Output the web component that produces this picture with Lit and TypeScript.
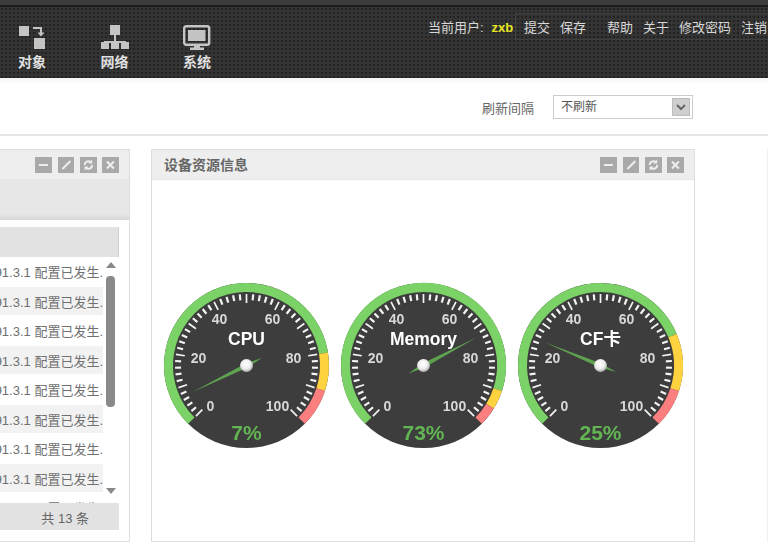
import { LitElement, html, css, svg } from "lit";
import { customElement, property } from "lit/decorators.js";

const CX = 88.5, CY = 88.5;
const polar = (r: number, deg: number) => {
  const a = ((deg - 90) * Math.PI) / 180;
  return [CX + r * Math.cos(a), CY + r * Math.sin(a)];
};
const toDeg = (v: number) => -135 + (v / 100) * 270;
const band = (from: number, to: number, r: number) => {
  const [x1, y1] = polar(r, toDeg(from));
  const [x2, y2] = polar(r, toDeg(to));
  const large = toDeg(to) - toDeg(from) > 180 ? 1 : 0;
  return `M${x1} ${y1}A${r} ${r} 0 ${large} 1 ${x2} ${y2}`;
};

@customElement("gauge-dial")
class GaugeDial extends LitElement {
  @property() label = "";
  @property({ type: Number }) value = 0;
  @property({ type: Number }) green = 80;
  @property({ type: Number }) yellow = 90;

  static styles = css`
    :host { display: block; width: 177px; height: 177px; }
    svg { display: block; filter: blur(0.4px); }
    .title { font: bold 17.5px "Liberation Sans", "Noto Sans CJK SC", sans-serif; fill: #fff; text-anchor: middle; }
    .num { font: bold 14px "Liberation Sans", sans-serif; fill: #d8d8d8; text-anchor: middle; }
    .val { font: bold 21px "Liberation Sans", sans-serif; fill: #62b552; text-anchor: middle; }
    .tick { stroke: #f4f4f4; fill: none; }
    .needle { fill: #5fa350; }
  `;

  render() {
    const ticks = [];
    for (let v = 0; v <= 100; v += 2) {
      const major = v % 10 === 0;
      const [x1, y1] = polar(71.5, toDeg(v));
      const [x2, y2] = polar(major ? 62.5 : 65.5, toDeg(v));
      ticks.push(svg`<line class="tick" x1=${x1} y1=${y1} x2=${x2} y2=${y2} stroke-width=${major ? 1.7 : 2.2}></line>`);
    }
    const nums: [string, number, number][] = [
      ["0", -36, 45], ["20", -48, -3], ["40", -27, -42],
      ["60", 26, -42], ["80", 47, -3], ["100", 31, 45],
    ];
    const [tx, ty] = polar(60, toDeg(this.value));
    const [bx, by] = polar(17, toDeg(this.value) + 180);
    const [sx, sy] = polar(2.2, toDeg(this.value) + 90);
    const ox = sx - CX, oy = sy - CY;
    return html`<svg width="177" height="177" viewBox="0 0 177 177">
      <defs>
        <radialGradient id="hub" cx="45%" cy="40%" r="60%">
          <stop offset="0" stop-color="#ffffff"></stop>
          <stop offset="0.6" stop-color="#eeeeee"></stop>
          <stop offset="1" stop-color="#a8a8a8"></stop>
        </radialGradient>
      </defs>
      <circle cx=${CX} cy=${CY} r="82.5" fill="#3d3d3d"></circle>
      <path d=${band(0, this.green, 78)} fill="none" stroke="#7bd266" stroke-width="9"></path>
      <path d=${band(this.green, this.yellow, 78)} fill="none" stroke="#ffd23f" stroke-width="9"></path>
      <path d=${band(this.yellow, 100, 78)} fill="none" stroke="#fb7f7f" stroke-width="9"></path>
      ${ticks}
      ${nums.map(([t, dx, dy]) => svg`<text class="num" x=${CX + dx} y=${CY + dy}>${t}</text>`)}
      <text class="title" x=${CX} y=${CY - 21}>${this.label}</text>
      <polygon class="needle" points="${tx},${ty} ${CX + ox},${CY + oy} ${bx},${by} ${CX - ox},${CY - oy}"></polygon>
      <circle cx=${CX} cy=${CY} r="6.5" fill="url(#hub)"></circle>
      <text class="val" x=${CX} y=${CY + 74.5}>${this.value}%</text>
    </svg>`;
  }
}

@customElement("panel-tools")
class PanelTools extends LitElement {
  static styles = css`
    :host { display: flex; gap: 5.5px; }
    span { display: block; width: 16.8px; height: 16px; background: #a9a9a9; }
    svg { display: block; width: 100%; height: 100%; }
    .s { stroke: #eee; stroke-width: 2; fill: none; }
  `;
  render() {
    return html`
      <span><svg viewBox="0 0 16 16"><path class="s" d="M3.5 8h9"></path></svg></span>
      <span><svg viewBox="0 0 16 16"><path class="s" d="M4 12l8-8"></path></svg></span>
      <span><svg viewBox="0 0 16 16"><path class="s" d="M4.2 8a3.8 3.8 0 0 1 6-3.1M11.8 8a3.8 3.8 0 0 1-6 3.1"></path><path d="M11.8 2.5v4h-4zM4.2 13.5v-4h4z" fill="#eee"></path></svg></span>
      <span><svg viewBox="0 0 16 16"><path class="s" d="M4.5 4.5l7 7M11.5 4.5l-7 7"></path></svg></span>
    `;
  }
}

@customElement("app-root")
class AppRoot extends LitElement {
  static styles = css`
    :host { display: block; width: 768px; height: 553px; overflow: hidden; background: #fff;
      font-family: "Liberation Sans", "Noto Sans CJK SC", sans-serif; position: relative; }
    .strip { height: 5px; background: #3b3b3b; border-bottom: 2px solid #1c1c1c; }
    .top { height: 71px; display: flex; justify-content: space-between; background-color: #343434;
      background-image: radial-gradient(circle at 2px 2px, #222 1px, transparent 1.3px); background-size: 4px 4px; }
    .nav { display: flex; gap: 54.5px; padding: 18px 0 0 18px; }
    .nav-item { width: 28px; display: flex; flex-direction: column; align-items: center; gap: 1px;
      color: #e0e0e0; font-size: 14px; font-weight: bold; line-height: 20px; white-space: nowrap; }
    .nav-item svg { display: block; width: 30px; height: 26px; }
    .ic { fill: #c4c4c4; }
    .ic-s { stroke: #c4c4c4; fill: none; }
    .user { display: flex; align-items: center; height: 27px; margin-top: 6px; font-size: 13px; color: #d8d8d8; white-space: nowrap; }
    .who { width: 87px; display: flex; align-items: baseline; }
    .zxb { color: #e6e622; font-weight: bold; margin-left: 8px; }
    .actions { display: flex; align-items: center; height: 27px; padding-left: 8px; border-left: 1px solid #444; border-top: 1px solid #3f3f3f; border-bottom: 1px solid #3f3f3f; box-sizing: border-box; }
    .actions span { margin-right: 10px; }
    .actions .gap { margin-right: 21px; }
    .actions span:last-child { margin-right: 1px; }
    .bar { height: 56px; background: linear-gradient(#f4f4f4 0, #fff 6px); border-bottom: 2px solid #e6e6e6;
      display: flex; justify-content: flex-end; align-items: center; padding-right: 75px; font-size: 13px; color: #666; }
    .bar-label { margin: 2px 19px 0 0; }
    .select { width: 140px; height: 24px; margin-top: 2px; box-sizing: border-box; border: 1px solid #ccc; display: flex; align-items: center; justify-content: space-between;
      padding: 0 2.5px 0 7px; font-size: 12px; color: #555; }
    .select span { margin-top: -4px; }
    .arrow { width: 18px; height: 18px; background: #cfcfcf; border: 1px solid #bbb; box-sizing: border-box; }
    .arrow svg { display: block; width: 100%; height: 100%; }
    .main { display: flex; padding-top: 13px; gap: 21px; }
    .panel { height: 393px; flex: none; box-sizing: border-box; border: 1px solid #dedede; background: #fff; overflow: hidden; }
    .left { width: 130px; border-left: 0; display: flex; flex-direction: column; }
    .right { width: 544px; }
    .faint { width: 10px; margin-left: 51px; flex: none; height: 393px; border-left: 1px solid #f0f0f0; }
    .phead { height: 29px; flex: none; background: #eee; display: flex; align-items: center; justify-content: space-between; padding: 0 10px 0 12px; border-bottom: 1px solid #e6e6e6; }
    .left .phead { justify-content: flex-end; }
    .ptitle { font-size: 14px; font-weight: bold; color: #666; margin-top: -2px; }
    .band { height: 40px; flex: none; background: linear-gradient(#e7e7e7 85%, #d6d6d6); }
    .thead { height: 30px; flex: none; width: 119px; margin-top: 7px; background: #e2e2e2; border-right: 1px solid #d0d0d0; box-sizing: border-box; }
    .listwrap { height: 246px; flex: none; display: flex; overflow: hidden; }
    .list { width: 103px; flex: none; padding-top: 0.5px; }
    .row { height: 28px; margin-bottom: 1.5px; display: flex; justify-content: flex-end; align-items: center;
      font-size: 13px; color: #707070; white-space: nowrap; overflow: hidden; }
    .row.alt { background: #f2f2f2; }
    .scroll { width: 13px; margin-left: 1px; display: flex; flex-direction: column; align-items: center; }
    .up, .down { width: 0; height: 0; border-left: 5px solid transparent; border-right: 5px solid transparent; }
    .up { border-bottom: 6px solid #888; margin-top: 5px; }
    .thumb { width: 9px; height: 131px; margin-top: 8px; background: #8a8a8a; border-radius: 4px; }
    .down { border-top: 6px solid #888; margin-top: 81px; }
    .foot { width: 119px; height: 27px; flex: none; background: #e2e2e2; font-size: 13px; color: #666; display: flex; align-items: center; justify-content: flex-end; padding: 1px 30px 0 0; box-sizing: border-box; }
    .gauges { display: flex; justify-content: center; padding-top: 97px; }
  `;

  render() {
    const rows = Array.from({ length: 9 }, (_, i) => i);
    return html`
      <div class="strip"></div>
      <div class="top">
        <div class="nav">
          <div class="nav-item">
            <svg viewBox="0 0 30 26"><rect class="ic" x="2" y="1" width="10" height="10"></rect><rect class="ic" x="17" y="13" width="11" height="11"></rect><path class="ic-s" stroke-width="2" d="M16 3h8v5"></path><path class="ic" d="M20.5 7.5h7l-3.5 4z"></path></svg>
            <span>对象</span>
          </div>
          <div class="nav-item">
            <svg viewBox="0 0 30 26"><rect class="ic" x="10" y="0" width="10" height="10"></rect><path class="ic-s" stroke-width="2" d="M15 10v7M5 21v-4h20v4"></path><rect class="ic" x="1" y="17" width="8" height="7"></rect><rect class="ic" x="11" y="17" width="8" height="7"></rect><rect class="ic" x="21" y="17" width="8" height="7"></rect></svg>
            <span>网络</span>
          </div>
          <div class="nav-item">
            <svg viewBox="0 0 30 26"><rect class="ic-s" stroke-width="2.4" x="2.2" y="1.2" width="25" height="18.5" rx="2"></rect><rect class="ic" x="6" y="5" width="17.5" height="11"></rect><path class="ic" d="M12 20h6v2.5h4v2.5H8v-2.5h4z"></path></svg>
            <span>系统</span>
          </div>
        </div>
        <div class="user">
          <div class="who"><span>当前用户:</span><span class="zxb">zxb</span></div>
          <div class="actions">
            <span>提交</span><span class="gap">保存</span><span>帮助</span><span>关于</span><span>修改密码</span><span>注销</span>
          </div>
        </div>
      </div>
      <div class="bar">
        <span class="bar-label">刷新间隔</span>
        <div class="select">
          <span>不刷新</span>
          <div class="arrow"><svg viewBox="0 0 16 16"><path d="M4 6l4 4 4-4" fill="none" stroke="#666" stroke-width="2"></path></svg></div>
        </div>
      </div>
      <div class="main">
        <div class="panel left">
          <div class="phead"><panel-tools></panel-tools></div>
          <div class="band"></div>
          <div class="thead"></div>
          <div class="listwrap">
            <div class="list">
              ${rows.map((i) => html`<div class="row ${i % 2 ? "alt" : ""}">91.3.1 配置已发生.</div>`)}
            </div>
            <div class="scroll">
              <div class="up"></div><div class="thumb"></div><div class="down"></div>
            </div>
          </div>
          <div class="foot">共 13 条</div>
        </div>
        <div class="panel right">
          <div class="phead"><span class="ptitle">设备资源信息</span><panel-tools></panel-tools></div>
          <div class="gauges">
            <gauge-dial label="CPU" value="7" green="80" yellow="90"></gauge-dial>
            <gauge-dial label="Memory" value="73" green="90" yellow="95"></gauge-dial>
            <gauge-dial label="CF卡" value="25" green="75" yellow="90"></gauge-dial>
          </div>
        </div>
        <div class="faint"></div>
      </div>
    `;
  }
}
